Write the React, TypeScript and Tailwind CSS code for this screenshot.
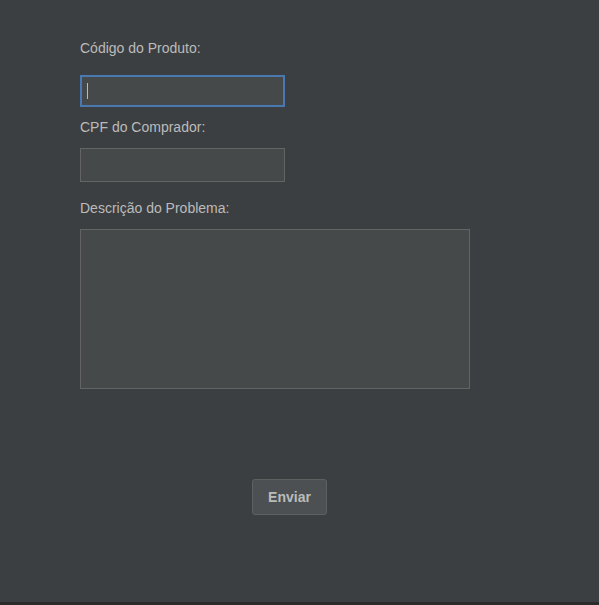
import React from "react";

export default function App() {
  return (
    <div className="w-[599px] h-[605px] bg-[#2b2b2b] flex flex-col" style={{ fontFamily: '"Liberation Sans", Arial, sans-serif' }}>
      <div className="h-[602px] bg-[#3c3f41] flex flex-col pl-[80px] pt-[40px]">
        <label className="h-[16px] text-[14px] leading-[16px] text-[#bbbbbb]">Código do Produto:</label>
        <div className="mt-[19px] w-[205px] h-[32px] bg-[#45494a] border-2 border-[#4a78b0] flex items-center pl-[5px]">
          <div className="w-px h-[16px] bg-[#bbbbbb]" />
        </div>
        <label className="mt-[12px] h-[16px] text-[14px] leading-[16px] text-[#bbbbbb]">CPF do Comprador:</label>
        <div className="mt-[13px] w-[205px] h-[34px] bg-[#45494a] border border-[#646464]" />
        <label className="mt-[18px] h-[16px] text-[14px] leading-[16px] text-[#bbbbbb]">Descrição do Problema:</label>
        <div className="mt-[13px] w-[390px] h-[160px] bg-[#45494a] border border-[#646464]" />
        <div className="mt-[90px] ml-[172px] w-[75px] h-[36px] bg-[#4c5052] border border-[#5e6060] rounded-[3px] flex items-center justify-center">
          <span className="text-[14px] font-bold text-[#bbbbbb]">Enviar</span>
        </div>
      </div>
    </div>
  );
}
